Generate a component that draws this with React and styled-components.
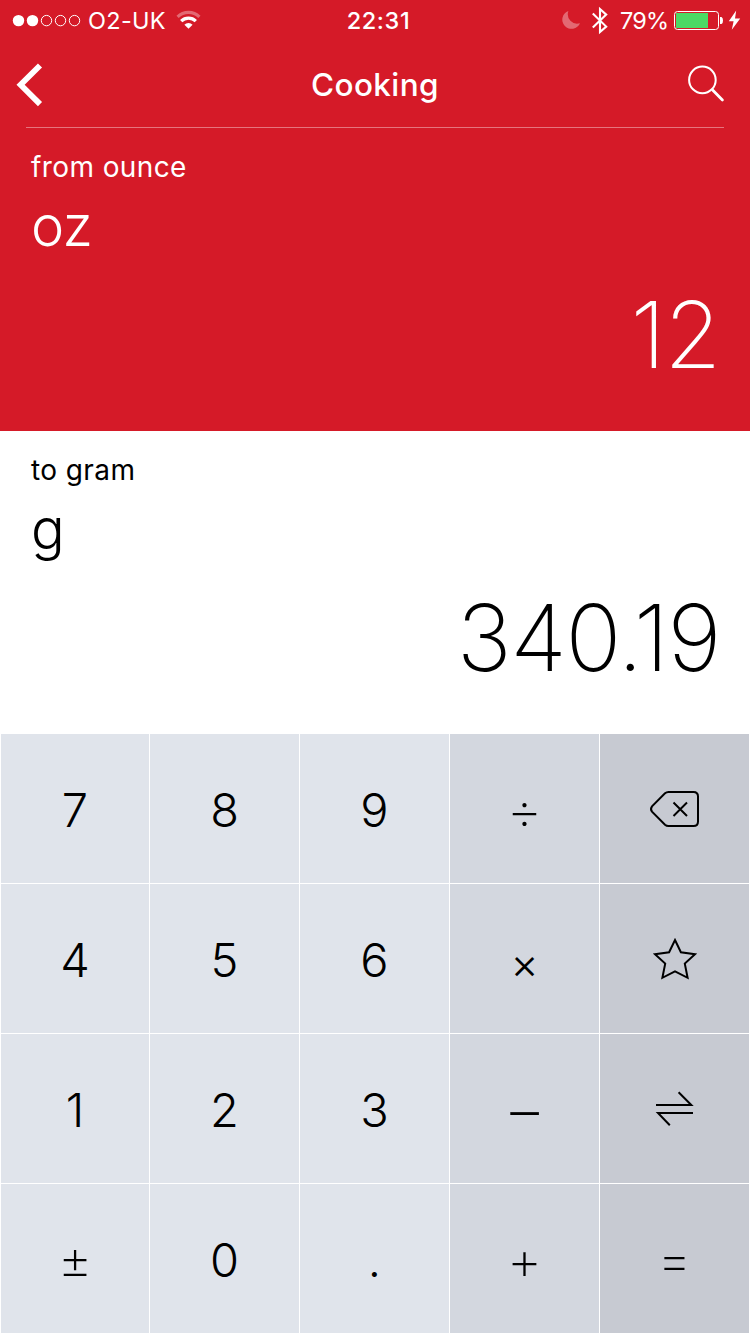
import React from 'react'
import styled, { createGlobalStyle } from 'styled-components'

const GlobalStyle = createGlobalStyle`
    * {
        box-sizing: border-box;
    }

    body {
        margin: 0;
        background: #fff;
        font-family: Inter, "Liberation Sans", sans-serif;
    }
`

const Screen = styled.div`
    width: 750px;
    height: 1334px;
    overflow: hidden;
    background: #fff;
`

const Header = styled.header`
    height: 128px;
    background: #d51a28;
    color: #fff;
`

const StatusBar = styled.div`
    height: 40px;
    display: grid;
    grid-template-columns: 1fr auto 1fr;
    font-size: 23.5px;
    line-height: 41px;

    svg {
        display: block;
        flex: none;
    }
`

const StatusLeft = styled.div`
    display: flex;
    padding-left: 12px;
`

const StatusRight = styled.div`
    display: flex;
    justify-content: flex-end;
    padding-right: 9px;
`

const Carrier = styled.span`
    width: 94px;
    padding-left: 6px;
    letter-spacing: 0.3px;
    white-space: nowrap;
`

const Clock = styled.span`
    font-weight: 550;
    letter-spacing: 0.6px;
    padding-left: 7px;
`

const Percent = styled.span`
    width: 53px;
    letter-spacing: -0.8px;
`

const NavBar = styled.nav`
    height: 87px;
    display: grid;
    grid-template-columns: 70px 1fr 70px;
`

const NavButton = styled.button`
    padding: 0;
    border: none;
    background: none;
    color: inherit;

    svg {
        display: block;
    }
`

const Title = styled.h1`
    margin: 0;
    font-size: 31.5px;
    font-weight: 450;
    line-height: 89px;
    letter-spacing: 0.4px;
    text-align: center;
`

const Divider = styled.hr`
    height: 1px;
    margin: 0 26px;
    border: none;
    background: rgba(255, 255, 255, 0.4);
`

const Panel = styled.section`
    height: 303px;
    padding: 19px 31px 0;
    background: ${props => (props.$active ? '#d51a28' : '#fff')};
    color: ${props => (props.$active ? '#fff' : '#000')};
`

const Label = styled.div`
    font-size: 28px;
    line-height: 40px;
    letter-spacing: 0.4px;
`

const Unit = styled.div`
    font-size: 56px;
    font-weight: 300;
    line-height: 78px;
    letter-spacing: -0.8px;
`

const Value = styled.div`
    margin-right: -1px;
    font-size: 92.5px;
    font-weight: 200;
    line-height: 138px;
    letter-spacing: -1.4px;
    text-align: right;
`

const Keypad = styled.div`
    display: grid;
    grid-template-columns: 148px repeat(4, 149px);
    grid-template-rows: repeat(4, 149px);
    gap: 1px;
    padding: 0 1px 1px;
`

const keyColors = {
    digit: '#e0e4eb',
    operator: '#d3d7df',
    action: '#c7cad2'
}

const Key = styled.button`
    display: flex;
    align-items: center;
    justify-content: center;
    padding: ${props => props.$drop}px 0 0;
    border: none;
    background: ${props => keyColors[props.$kind]};
    color: #000;
    font-family: inherit;
    font-size: ${props => props.$size || 47}px;
    font-weight: ${props => (props.$size > 47 ? 220 : 300)};
    line-height: 60px;
`

const KeyIcon = styled.svg`
    display: block;
    width: 61px;
    height: 61px;
    fill: none;
    stroke: #000;
    stroke-width: 2;
`

const Signal = () => (
    <svg width="70" height="40" viewBox="12 0 70 40">
        <circle cx="18.5" cy="20.6" r="5.7" fill="#fff" />
        <circle cx="32.5" cy="20.6" r="5.7" fill="#fff" />
        {[46.5, 60.5, 74.5].map(x => (
            <circle key={x} cx={x} cy="20.6" r="5.2" fill="none" stroke="#fff" />
        ))}
    </svg>
)

const Wifi = () => (
    <svg width="26" height="40" viewBox="176 0 26 40" fill="none" stroke="#fff">
        <path d="M177.6 16.8A15.6 15.6 0 0 1 199.4 16.8" strokeWidth="3.2" opacity="0.35" />
        <path d="M181.2 21.2A10.4 10.4 0 0 1 195.8 21.2" strokeWidth="3.2" />
        <path d="M188.5 28.8L184.4 24.7A5.8 5.8 0 0 1 192.6 24.7Z" fill="#fff" stroke="none" />
    </svg>
)

const StatusIcons = () => (
    <svg width="59" height="40" viewBox="561 0 59 40">
        <path d="M568.4 11A9.2 9.2 0 1 0 580 23.2A9.4 9.4 0 0 1 568.4 11Z" fill="#fff" opacity="0.35" />
        <path d="M592.8 13.6L606.2 26.6L600 32V9L606.2 14.6L592.8 27.4" fill="none" stroke="#fff" strokeWidth="2.1" />
    </svg>
)

const Battery = () => (
    <svg width="68" height="40" viewBox="673 0 68 40">
        <rect x="674.5" y="11.5" width="44" height="18" rx="3" fill="none" stroke="#fff" />
        <rect x="676" y="13" width="32" height="15" fill="#4cd964" />
        <path d="M720 17H721.5Q723 17.5 723 20.5T721.5 24H720Z" fill="#fff" />
        <path d="M736.2 10.6L728.8 21.2H733.6L731.8 29.8L740.2 18.4H735Z" fill="#fff" />
    </svg>
)

const icons = {
    backspace: (
        <KeyIcon>
            <path d="M24.5 14H49.5Q54 14 54 18.5V43.5Q54 48 49.5 48H24.5Q22.5 48 21 46.7L8 33.7Q6 31 8 28.3L21 15.3Q22.5 14 24.5 14Z" />
            <path d="M29.5 24.5L43 38M43 24.5L29.5 38" />
        </KeyIcon>
    ),
    star: (
        <KeyIcon>
            <path d="M31 12L36.9 24.3L51 26.3L40.8 35.6L43.6 49.8L31 43.4L18.4 49.8L21.2 35.6L11 26.3L25.1 24.3Z" />
        </KeyIcon>
    ),
    swap: (
        <KeyIcon>
            <path d="M12 27H47.3L34.6 14.3M49 35H14L25.8 47.3" />
        </KeyIcon>
    )
}

const keys = [
    { text: '7' }, { text: '8' }, { text: '9' }, { text: '÷', kind: 'operator', size: 55, drop: 2 }, { icon: 'backspace' },
    { text: '4' }, { text: '5' }, { text: '6' }, { text: '×', kind: 'operator', size: 43, drop: 9 }, { icon: 'star' },
    { text: '1' }, { text: '2' }, { text: '3' }, { text: '−', kind: 'operator', size: 67, drop: 1 }, { icon: 'swap' },
    { text: '±', size: 53, drop: 2 }, { text: '0' }, { text: '.' }, { text: '+', kind: 'operator', size: 55, drop: 2 }, { text: '=', kind: 'action', size: 54, drop: 3 }
]

const Conversion = ({ label, unit, value, active }) => (
    <Panel $active={active}>
        <Label>{label}</Label>
        <Unit>{unit}</Unit>
        <Value>{value}</Value>
    </Panel>
)

const App = () => (
    <Screen>
        <GlobalStyle />
        <Header>
            <StatusBar>
                <StatusLeft>
                    <Signal />
                    <Carrier>O2-UK</Carrier>
                    <Wifi />
                </StatusLeft>
                <Clock>22:31</Clock>
                <StatusRight>
                    <StatusIcons />
                    <Percent>79%</Percent>
                    <Battery />
                </StatusRight>
            </StatusBar>
            <NavBar>
                <NavButton aria-label="Back">
                    <svg width="70" height="87" viewBox="0 40 70 87">
                        <path d="M40 64.5L20.6 83.8L40 103.1" fill="none" stroke="#fff" strokeWidth="5.8" />
                    </svg>
                </NavButton>
                <Title>Cooking</Title>
                <NavButton aria-label="Search">
                    <svg width="70" height="87" viewBox="680 40.5 70 87" fill="none" stroke="#fff">
                        <circle cx="702.4" cy="79.4" r="13.3" strokeWidth="2" />
                        <path d="M712.6 89.6L722.4 99.4" strokeWidth="2.8" strokeLinecap="round" />
                    </svg>
                </NavButton>
            </NavBar>
            <Divider />
        </Header>
        <Conversion active label="from ounce" unit="oz" value="12" />
        <Conversion label="to gram" unit="g" value="340.19" />
        <Keypad>
            {keys.map(({ text, icon, kind, size, drop }) => (
                <Key
                    key={text || icon}
                    $kind={icon ? 'action' : kind || 'digit'}
                    $size={size}
                    $drop={icon ? 0 : drop || 3}
                    aria-label={icon}
                >
                    {icon ? icons[icon] : text}
                </Key>
            ))}
        </Keypad>
    </Screen>
)

export default App
